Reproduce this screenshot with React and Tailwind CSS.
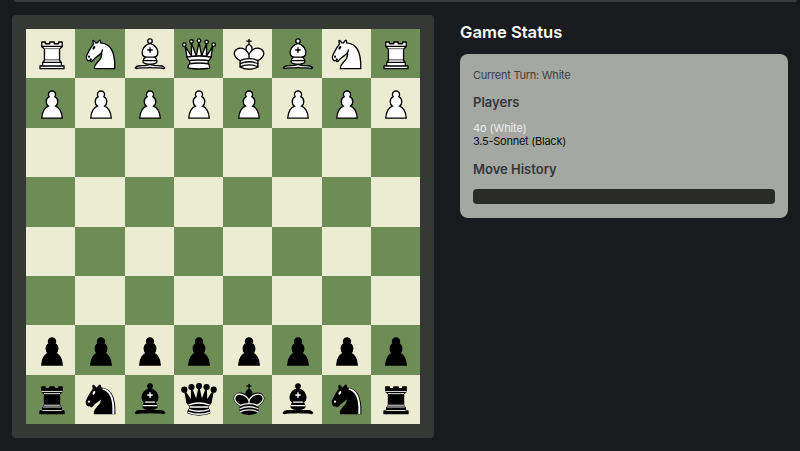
import React from 'react'

const WHITE = { fill: '#fff', stroke: '#000', accent: '#000' }
const BLACK = { fill: '#000', stroke: '#000', accent: '#fff' }

function Pawn({ c })
{
  return <path d="M22.5 9c-2.21 0-4 1.79-4 4 0 .89.29 1.71.78 2.38C17.33 16.5 16 18.59 16 21c0 2.03.94 3.84 2.41 5.03-3 1.06-7.41 5.55-7.41 13.47h23c0-7.92-4.41-12.41-7.41-13.47 1.47-1.19 2.41-3 2.41-5.03 0-2.41-1.33-4.5-3.28-5.62.49-.67.78-1.49.78-2.38 0-2.21-1.79-4-4-4z" fill={c.fill} stroke="#000" strokeWidth="1.5" strokeLinecap="round" />
}

function Rook({ c })
{
  if ( c === WHITE ) return (
    <g fill="#fff" fillRule="evenodd" stroke="#000" strokeWidth="1.5" strokeLinecap="round" strokeLinejoin="round">
      <path d="M9 39h27v-3H9v3zM12 36v-4h21v4H12zM11 14V9h4v2h5V9h5v2h5V9h4v5" strokeLinecap="butt" />
      <path d="M34 14l-3 3H14l-3-3" />
      <path d="M31 17v12.5H14V17" strokeLinecap="butt" strokeLinejoin="miter" />
      <path d="M31 29.5l1.5 2.5h-20l1.5-2.5" />
      <path d="M11 14h23" fill="none" strokeLinejoin="miter" />
    </g>
  )
  return (
    <g fill="#000" fillRule="evenodd" stroke="#000" strokeWidth="1.5" strokeLinecap="round" strokeLinejoin="round">
      <path d="M9 39h27v-3H9v3zM12.5 32l1.5-2.5h17l1.5 2.5h-20zM12 36v-4h21v4H12z" strokeLinecap="butt" />
      <path d="M14 29.5v-13h17v13H14z" strokeLinecap="butt" strokeLinejoin="miter" />
      <path d="M14 16.5L11 14h23l-3 2.5H14zM11 14V9h4v2h5V9h5v2h5V9h4v5H11z" strokeLinecap="butt" />
      <path d="M12 35.5h21M13 31.5h19M14 29.5h17M14 16.5h17M11 14h23" fill="none" stroke="#fff" strokeWidth="1" strokeLinejoin="miter" />
    </g>
  )
}

function Knight({ c })
{
  return (
    <g fill="none" fillRule="evenodd" stroke="#000" strokeWidth="1.5" strokeLinecap="round" strokeLinejoin="round">
      <path d="M22 10c10.5 1 16.5 8 16 29H15c0-9 10-6.5 8-21" fill={c.fill} />
      <path d="M24 18c.38 2.91-5.55 7.37-8 9-3 2-2.82 4.34-5 4-1.042-.94 1.41-3.04 0-3-1 0 .19 1.23-1 2-1 0-4.003 1-4-4 0-2 6-12 6-12s1.89-1.9 2-3.5c-.73-.994-.5-2-.5-3 1-1 3 2.5 3 2.5h2s.78-1.992 2.5-3c1 0 1 3 1 3" fill={c.fill} />
      <path d="M9.5 25.5a.5.5 0 1 1-1 0 .5.5 0 1 1 1 0zm5.433-9.75a.5 1.5 30 1 1-.866-.5.5 1.5 30 1 1 .866.5z" fill={c.accent} stroke={c.accent} />
      { c === BLACK && <path d="M24.55 10.4l-.45 1.45.5.15c3.15 1 5.65 2.49 7.9 6.75S35.75 29.06 35.25 39l-.05.5h2.25l.05-.5c.5-10.06-.88-16.85-3.25-21.34-2.37-4.49-5.79-6.64-9.19-7.16l-.51-.1z" fill="#fff" stroke="none" /> }
    </g>
  )
}

function Bishop({ c })
{
  return (
    <g fill="none" fillRule="evenodd" stroke="#000" strokeWidth="1.5" strokeLinecap="round" strokeLinejoin="round">
      <g fill={c.fill} strokeLinecap="butt">
        <path d="M9 36c3.39-.97 10.11.43 13.5-2 3.39 2.43 10.11 1.03 13.5 2 0 0 1.65.54 3 2-.68.97-1.65.99-3 .5-3.39-.97-10.11.46-13.5-1-3.39 1.46-10.11.03-13.5 1-1.354.49-2.323.47-3-.5 1.354-1.94 3-2 3-2z" />
        <path d="M15 32c2.5 2.5 12.5 2.5 15 0 .5-1.5 0-2 0-2 0-2.5-2.5-4-2.5-4 5.5-1.5 6-11.5-5-15.5-11 4-10.5 14-5 15.5 0 0-2.5 1.5-2.5 4 0 0-.5.5 0 2z" />
        <path d="M25 8a2.5 2.5 0 1 1-5 0 2.5 2.5 0 1 1 5 0z" />
      </g>
      <path d="M17.5 26h10M15 30h15m-7.5-14.5v5M20 18h5" stroke={c.accent} strokeLinejoin="miter" />
    </g>
  )
}

function Queen({ c })
{
  if ( c === WHITE ) return (
    <g fill="#fff" fillRule="evenodd" stroke="#000" strokeWidth="1.5" strokeLinejoin="round">
      <path d="M8 12a2 2 0 1 1-4 0 2 2 0 1 1 4 0zM24.5 7.5a2 2 0 1 1-4 0 2 2 0 1 1 4 0zM41 12a2 2 0 1 1-4 0 2 2 0 1 1 4 0zM16 8.5a2 2 0 1 1-4 0 2 2 0 1 1 4 0zM33 9a2 2 0 1 1-4 0 2 2 0 1 1 4 0z" />
      <path d="M9 26c8.5-1.5 21-1.5 27 0l2-12-7 11V11l-5.5 13.5-3-15-3 15-5.5-14V25L7 14l2 12z" strokeLinecap="butt" />
      <path d="M9 26c0 2 1.5 2 2.5 4 1 1.5 1 1 .5 3.5-1.5 1-1.5 2.5-1.5 2.5-1.5 1.5.5 2.5.5 2.5 6.5 1 16.5 1 23 0 0 0 1.5-1 0-2.5 0 0 .5-1.5-1-2.5-.5-2.5-.5-2 .5-3.5 1-2 2.5-2 2.5-4-8.5-1.5-18.5-1.5-27 0z" strokeLinecap="butt" />
      <path d="M11.5 30c3.5-1 18.5-1 22 0M12 33.5c6-1 15-1 21 0" fill="none" />
    </g>
  )
  return (
    <g fill="#000" fillRule="evenodd" stroke="#000" strokeWidth="1.5" strokeLinecap="round" strokeLinejoin="round">
      <circle cx="6" cy="12" r="2.75" />
      <circle cx="14" cy="9" r="2.75" />
      <circle cx="22.5" cy="8" r="2.75" />
      <circle cx="31" cy="9" r="2.75" />
      <circle cx="39" cy="12" r="2.75" />
      <path d="M9 26c8.5-1.5 21-1.5 27 0l2.5-12.5L31 25l-.3-14.1-5.2 13.6-3-14.5-3 14.5-5.2-13.6L14 25 6.5 13.5 9 26z" strokeLinecap="butt" />
      <path d="M9 26c0 2 1.5 2 2.5 4 1 1.5 1 1 .5 3.5-1.5 1-1.5 2.5-1.5 2.5-1.5 1.5.5 2.5.5 2.5 6.5 1 16.5 1 23 0 0 0 1.5-1 0-2.5 0 0 .5-1.5-1-2.5-.5-2.5-.5-2 .5-3.5 1-2 2.5-2 2.5-4-8.5-1.5-18.5-1.5-27 0z" strokeLinecap="butt" />
      <path d="M11 38.5a35 35 1 0 0 23 0" fill="none" strokeLinecap="butt" />
      <path d="M11 29a35 35 1 0 1 23 0M12.5 31.5h20M11.5 34.5a35 35 1 0 0 22 0M10.5 37.5a35 35 1 0 0 24 0" fill="none" stroke="#fff" />
    </g>
  )
}

function King({ c })
{
  if ( c === WHITE ) return (
    <g fill="none" fillRule="evenodd" stroke="#000" strokeWidth="1.5" strokeLinecap="round" strokeLinejoin="round">
      <path d="M22.5 11.63V6M20 8h5" strokeLinejoin="miter" />
      <path d="M22.5 25s4.5-7.5 3-10.5c0 0-1-2.5-3-2.5s-3 2.5-3 2.5c-1.5 3 3 10.5 3 10.5" fill="#fff" strokeLinecap="butt" strokeLinejoin="miter" />
      <path d="M12.5 37c5.5 3.5 14.5 3.5 20 0v-7s9-4.5 6-10.5c-4-6.5-13.5-3.5-16 4V27v-3.5c-2.5-7.5-12-10.5-16-4-3 6 6 10.5 6 10.5v7" fill="#fff" />
      <path d="M12.5 30c5.5-3 14.5-3 20 0m-20 3.5c5.5-3 14.5-3 20 0m-20 3.5c5.5-3 14.5-3 20 0" />
    </g>
  )
  return (
    <g fill="none" fillRule="evenodd" stroke="#000" strokeWidth="1.5" strokeLinecap="round" strokeLinejoin="round">
      <path d="M22.5 11.63V6" strokeLinejoin="miter" />
      <path d="M22.5 25s4.5-7.5 3-10.5c0 0-1-2.5-3-2.5s-3 2.5-3 2.5c-1.5 3 3 10.5 3 10.5" fill="#000" strokeLinecap="butt" strokeLinejoin="miter" />
      <path d="M12.5 37c5.5 3.5 14.5 3.5 20 0v-7s9-4.5 6-10.5c-4-6.5-13.5-3.5-16 4V27v-3.5c-2.5-7.5-12-10.5-16-4-3 6 6 10.5 6 10.5v7" fill="#000" />
      <path d="M20 8h5" strokeLinejoin="miter" />
      <path d="M32 29.5s8.5-4 6.03-9.65C34.15 14 25 18 22.5 24.5l.01 2.1-.01-2.1C20 18 9.906 14 6.997 19.85c-2.497 5.65 4.853 9 4.853 9" stroke="#ececec" />
      <path d="M12.5 30c5.5-3 14.5-3 20 0m-20 3.5c5.5-3 14.5-3 20 0m-20 3.5c5.5-3 14.5-3 20 0" stroke="#ececec" />
    </g>
  )
}

const BACK = [Rook, Knight, Bishop, Queen, King, Bishop, Knight, Rook]
const PAWNS = Array(8).fill(Pawn)

const RANKS = [
  { pieces: BACK, color: WHITE },
  { pieces: PAWNS, color: WHITE },
  {}, {}, {}, {},
  { pieces: PAWNS, color: BLACK },
  { pieces: BACK, color: BLACK },
]

function Square({ dark, Piece, color })
{
  return (
    <div className={'flex items-center justify-center ' + (dark ? 'bg-[#6e8d56]' : 'bg-[#ebecd2]')}>
      { Piece && <svg viewBox="0 0 45 45" className="w-10 h-10 ml-0.5"><Piece c={color} /></svg> }
    </div>
  )
}

export default function App()
{
  return (
    <div className="w-[800px] h-[451px] overflow-hidden bg-[#1a1b1f] font-['Inter',sans-serif]">
      <div className="h-[2px] ml-[14px] mr-[3px] bg-[#3a3b3e] rounded-b-sm" />
      <div className="flex items-start pl-3 pr-3 pt-[13px] gap-[26px]">
        <div className="p-[14px] bg-[#363836] rounded">
          <div className="grid grid-cols-8 grid-rows-8 w-[394px] h-[395px]">
            { RANKS.map((rank, r) => Array.from({ length: 8 }).map((_, f) => (
              <Square key={r + '-' + f} dark={(r + f) % 2 === 1} Piece={rank.pieces && rank.pieces[f]} color={rank.color} />
            ))) }
          </div>
        </div>

        <div className="flex-1">
          <h2 className="mt-[7px] mb-3 text-[16.6px] leading-5 font-semibold text-white">Game Status</h2>
          <div className="h-[164px] p-[13px] bg-[#a5a7a3] rounded-lg">
            <p className="text-[11px] leading-4 tracking-[-0.25px] text-[#3f413f]">Current Turn: White</p>
            <h3 className="mt-[11px] text-[13px] leading-4 font-semibold text-[#35373a]">Players</h3>
            <p className="mt-3 text-[11px] leading-[13px] tracking-[-0.1px] text-[#ececec]">4o (White)</p>
            <p className="text-[11px] leading-[13px] tracking-[-0.25px] text-[#0c0c0c]">3.5-Sonnet (Black)</p>
            <h3 className="mt-[13px] text-[13px] leading-4 font-semibold text-[#35373a]">Move History</h3>
            <div className="mt-3 h-[15px] bg-[#2a2b29] rounded-sm" />
          </div>
        </div>
      </div>
    </div>
  )
}
